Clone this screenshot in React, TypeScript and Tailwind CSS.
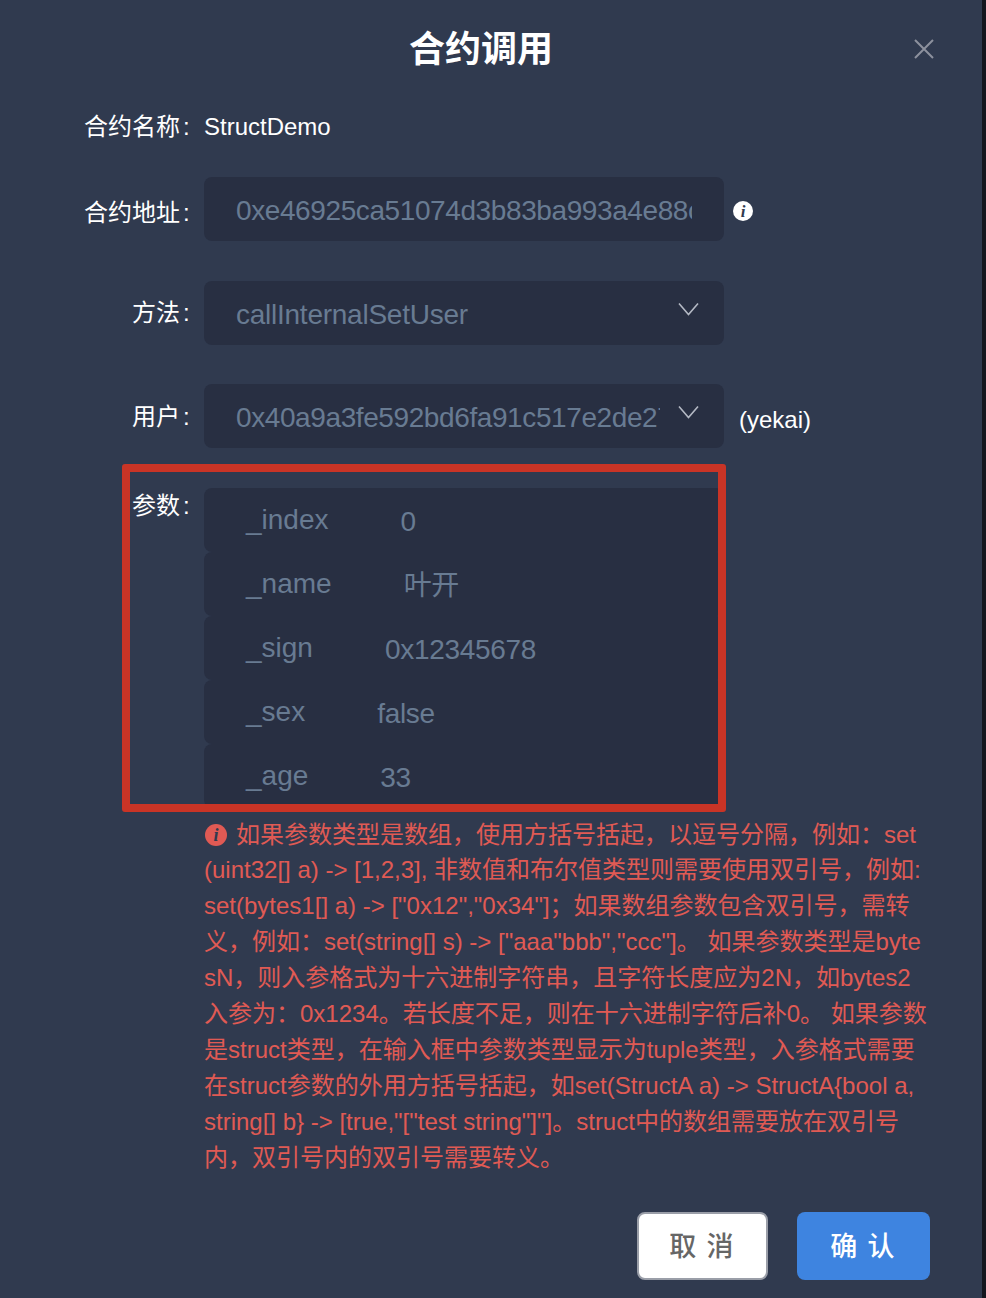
const params = [
  { name: "_index", value: "0" },
  { name: "_name", value: "叶开" },
  { name: "_sign", value: "0x12345678" },
  { name: "_sex", value: "false" },
  { name: "_age", value: "33" },
];

const helpLines = [
  "(uint32[] a) -> [1,2,3], 非数值和布尔值类型则需要使用双引号，例如:",
  "set(bytes1[] a) -> [\"0x12\",\"0x34\"]；如果数组参数包含双引号，需转",
  "义，例如：set(string[] s) -> [\"aaa\"bbb\",\"ccc\"]。 如果参数类型是byte",
  "sN，则入参格式为十六进制字符串，且字符长度应为2N，如bytes2",
  "入参为：0x1234。若长度不足，则在十六进制字符后补0。 如果参数",
  "是struct类型，在输入框中参数类型显示为tuple类型，入参格式需要",
  "在struct参数的外用方括号括起，如set(StructA a) -> StructA{bool a,",
  "string[] b} -> [true,\"[\"test string\"]\"]。struct中的数组需要放在双引号",
  "内，双引号内的双引号需要转义。",
];

function Chevron() {
  return (
    <svg width="22" height="14" viewBox="0 0 22 14" fill="none" className="absolute right-[24px] top-[21px]">
      <path d="M1 1.5 L10.5 12.5 L20 1.5" stroke="#b4b9c4" strokeWidth="1.6" />
    </svg>
  );
}

export default function App() {
  return (
    <div className="flex h-[1298px] w-[986px] overflow-hidden font-['Liberation_Sans','Noto_Sans_CJK_SC',sans-serif] bg-[#14161e]">
      <div className="relative h-full w-[982px] bg-[#303a4f]">
        {/* Header */}
        <div className="relative flex h-[98px] items-center justify-center pr-[20px] pt-[1px] text-[36px] font-bold text-white">
          合约调用
          <svg width="22" height="22" viewBox="0 0 22 22" fill="none" className="absolute left-[913px] top-[38px]">
            <path d="M2 2 L20 20 M20 2 L2 20" stroke="#8d919e" strokeWidth="2" />
          </svg>
        </div>

        {/* Form */}
        <div className="flex h-[58px] items-center text-[24px] text-white">
          <span className="w-[190px] pl-[84px] whitespace-nowrap">合约名称<span className="ml-[3px]">:</span></span>
          <span className="ml-[14px]">StructDemo</span>
        </div>

        <div className="mt-[21px] flex items-center text-[24px] text-white">
          <span className="w-[190px] pl-[84px] pt-[8px] whitespace-nowrap">合约地址<span className="ml-[3px]">:</span></span>
          <div className="ml-[14px] flex h-[64px] w-[520px] items-center rounded-lg bg-[#282f42] pl-[32px] pr-[32px] pt-[4px] text-[28px] tracking-[-0.4px] text-[#687b92]">
            <span className="overflow-hidden whitespace-nowrap">0xe46925ca51074d3b83ba993a4e88c3f</span>
          </div>
          <div className="ml-[9px] mt-[4px] flex h-[20px] w-[20px] items-center justify-center rounded-full bg-white font-['Liberation_Serif',serif] text-[17px] font-bold italic leading-none text-[#303a4f]">
            i
          </div>
        </div>

        <div className="mt-[40px] flex items-center text-[24px] text-white">
          <span className="w-[190px] pl-[132px] whitespace-nowrap">方法<span className="ml-[3px]">:</span></span>
          <div className="relative ml-[14px] flex h-[64px] w-[520px] items-center rounded-lg bg-[#282f42] pl-[32px] pt-[4px] text-[28px] tracking-[-0.25px] text-[#687b92]">
            callInternalSetUser
            <Chevron />
          </div>
        </div>

        <div className="mt-[39px] flex items-center text-[24px] text-white">
          <span className="w-[190px] pl-[132px] whitespace-nowrap pt-[2px]">用户<span className="ml-[3px]">:</span></span>
          <div className="relative ml-[14px] flex h-[64px] w-[520px] items-center rounded-lg bg-[#282f42] pl-[32px] pr-[64px] pt-[4px] text-[28px] tracking-[-0.4px] text-[#687b92]">
            <span className="overflow-hidden whitespace-nowrap">0x40a9a3fe592bd6fa91c517e2de27b</span>
            <Chevron />
          </div>
          <span className="ml-[15px] pt-[7px]">(yekai)</span>
        </div>

        <div className="mt-[40px] flex items-start text-[24px] text-white">
          <span className="w-[190px] pl-[132px] whitespace-nowrap">参数<span className="ml-[3px]">:</span></span>
          <div className="ml-[14px] w-[520px]">
            {params.map((p) => (
              <div key={p.name} className="flex h-[64px] items-center gap-[72px] rounded-lg bg-[#282f42] pl-[42px] text-[28px] text-[#687b92]">
                <span>{p.name}</span>
                <span className="pt-[4px] tracking-[-0.3px]">{p.value}</span>
              </div>
            ))}
          </div>
        </div>

        {/* Help text */}
        <div className="ml-[204px] mt-[8px] w-[740px] text-[24px] leading-[36px] text-[#e05a54]">
          <div className="flex items-center whitespace-nowrap pt-[1px] -mb-[1px]">
            <div className="mr-[9px] ml-[1px] flex h-[22px] w-[22px] items-center justify-center rounded-full bg-[#e05a54] font-['Liberation_Serif',serif] text-[18px] font-bold italic leading-none text-[#303a4f]">
              i
            </div>
            如果参数类型是数组，使用方括号括起，以逗号分隔，例如：set
          </div>
          {helpLines.map((line) => (
            <div key={line} className="whitespace-nowrap">{line}</div>
          ))}
        </div>

        {/* Footer */}
        <div className="mt-[36px] flex justify-end gap-[29px] pr-[52px] font-['Noto_Sans_CJK_SC',sans-serif] text-[27px] font-medium tracking-[0.08em]">
          <button className="flex h-[68px] w-[131px] items-center justify-center rounded-lg border-2 border-[#9a9ea8] bg-white pb-[2px] text-[#666666]">
            取 消
          </button>
          <button className="flex h-[68px] w-[133px] items-center justify-center rounded-lg bg-[#3e84e0] pb-[2px] text-white">
            确 认
          </button>
        </div>

        {/* Red annotation box drawn over the params */}
        <div className="absolute left-[122px] top-[464px] h-[348px] w-[604px] rounded-[3px] border-[8px] border-[#c93426]" />
      </div>
    </div>
  );
}
